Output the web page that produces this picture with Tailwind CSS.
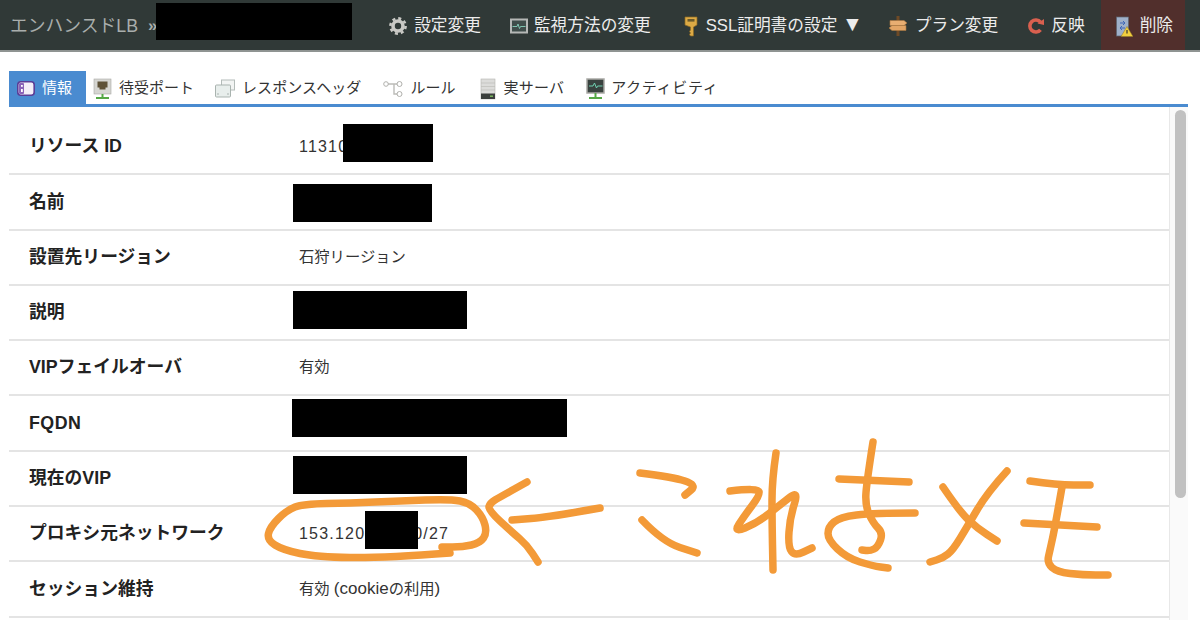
<!DOCTYPE html>
<html lang="ja">
<head>
    <meta charset="utf-8" />
    <title>エンハンスドLB</title>
    <script src="https://cdn.jsdelivr.net/npm/@tailwindcss/browser@4"></script>
</head>
<body class="relative w-[1200px] h-[620px] overflow-hidden bg-white font-['Liberation_Sans','Noto_Sans_CJK_JP',sans-serif]">

    <!-- Top bar -->
    <header class="flex items-center h-[52px] bg-[#303937] border-b-2 border-[#8f9492] text-[16.700px] text-[#ececec]">
        <span class="ml-[10px] mt-[2px] text-[17.800px] text-[#a9aeac]">エンハンスドLB</span>
        <span class="ml-[10px] mt-[2px] text-[#a9aeac] font-bold">»</span>
        <span class="w-[196px] h-[37px] -ml-[1px] -mt-[7px] bg-black"></span>

        <nav class="flex items-stretch h-full ml-auto mr-[15px]">
            <a class="flex items-center gap-[7px] pt-[2px] pr-[29px]">
                <svg class="w-[18px] h-[18px]" viewBox="0 0 18 18"><circle cx="9" cy="9" r="5" fill="none" stroke="#c9c9c5" stroke-width="3.6"/><circle cx="9" cy="9" r="7.6" fill="none" stroke="#c9c9c5" stroke-width="2.6" stroke-dasharray="3 2.97"/></svg>
                <span>設定変更</span>
            </a>
            <a class="flex items-center gap-[6px] pt-[2px] pr-[33px]">
                <svg class="w-[18px] h-[16px]" viewBox="0 0 18 16"><rect x="1" y="1.500" width="16" height="13" fill="#3f4d4a" stroke="#b5b8b6" stroke-width="2"/><path d="M2.500 8.500h4.500l1-2.500 1.500 4.500 1-2h5" fill="none" stroke="#7fc4b0"/></svg>
                <span>監視方法の変更</span>
            </a>
            <a class="flex items-center gap-[8px] pt-[2px] pr-[25px]">
                <svg class="w-[14px] h-[21px]" viewBox="0 0 14 21"><path d="M1 1h12v8l-3.500 2v9H6.500l-1-1.500 1-1.500-1-1.500 1-1.500v-3L1 9z" fill="#dcaa45" stroke="#8e6a22" stroke-width=".7"/><rect x="3.500" y="3" width="7" height="2.600" fill="#6b5a2a"/></svg>
                <span>SSL証明書の設定 <span class="text-[21px] leading-none">▼</span></span>
            </a>
            <a class="flex items-center gap-[7px] pt-[2px] pr-[29px]">
                <svg class="w-[20px] h-[22px]" viewBox="0 0 20 22"><rect x="8.500" y="1" width="3" height="20" fill="#6e4a26"/><path d="M2 5.500h14l3 2.500-3 2.500H2z" fill="#e8ae72" stroke="#a8753f" stroke-width=".6"/><path d="M4 10.500h14v5H4l-3-2.500z" fill="#e2a566" stroke="#a8753f" stroke-width=".6"/></svg>
                <span>プラン変更</span>
            </a>
            <a class="flex items-center gap-[7px] pt-[2px] pr-[16px]">
                <svg class="w-[17px] h-[18px]" viewBox="0 0 17 18"><path d="M13.500 5.200A6 6 0 1 0 13.500 12.800" fill="none" stroke="#d9604f" stroke-width="3.600"/><path d="M10.500 6.500L17 8V2z" fill="#d9604f"/></svg>
                <span>反映</span>
            </a>
            <a class="flex items-center gap-[7px] pt-[2px] pl-[15px] pr-[12px] bg-[#512f2c]">
                <svg class="w-[17px] h-[21px]" viewBox="0 0 17 21"><rect x=".5" y="1" width="12" height="19" fill="#9fb0c9" stroke="#5d6470" stroke-width=".7"/><path d="M4 7h5M7 5l2 2-2 2M9 12H4M6 10l-2 2 2 2" fill="none" stroke="#3e67b8"/><path d="M11 10.500L17 20.500H5z" fill="#f2cf3f" stroke="#8a7424" stroke-width=".5"/><path d="M11 14v3.500" stroke="#333" stroke-width="1.200"/></svg>
                <span>削除</span>
            </a>
        </nav>
    </header>

    <!-- Tabs -->
    <div class="flex items-stretch h-[36px] mt-[19px] mx-[9px] w-[1179px] border-b-[3px] border-[#4a8bd0] text-[15px] text-[#333]">
        <a class="flex items-center gap-[7px] w-[77px] pl-[8px] pt-[2px] bg-[#4a8bd0] text-white">
            <svg class="w-[18px] h-[15px]" viewBox="0 0 18 15"><rect x=".8" y=".8" width="16.400" height="13.400" rx="3" fill="#f4eef8" stroke="#5a3c96" stroke-width="1.600"/><rect x="2" y="2" width="5" height="11" rx="1" fill="#8a63b8"/><rect x="4" y="4" width="1.800" height="1.800" fill="#fff"/><rect x="4" y="8" width="1.800" height="3" fill="#fff"/></svg>
            <span>情報</span>
        </a>
        <a class="flex items-center gap-[7px] ml-[7px] pt-[2px]">
            <svg class="w-[19px] h-[22px]" viewBox="0 0 19 22"><rect x="1" y="1" width="17" height="15" fill="#d6d6d2" stroke="#a9a9a5" stroke-width=".6"/><path d="M4.500 3.500h10v6h-2v2h-6v-2h-2z" fill="#5f5238"/><path d="M9.500 16v3M3 20h13" stroke="#55a845" stroke-width="2"/></svg>
            <span>待受ポート</span>
        </a>
        <a class="flex items-center gap-[7px] ml-[21px] pt-[2px]">
            <svg class="w-[20px] h-[19px]" viewBox="0 0 20 19"><rect x="6.500" y="1" width="13" height="10" fill="#f2f4f3" stroke="#b4bcb9"/><rect x=".5" y="6" width="15" height="12" rx="1" fill="#e8eeec" stroke="#a9b3af"/><path d="M3 16v-2M13 16v-2" stroke="#a9b3af"/></svg>
            <span class="tracking-[0.1px]">レスポンスヘッダ</span>
        </a>
        <a class="flex items-center gap-[7px] ml-[22px] pt-[2px]">
            <svg class="w-[20px] h-[17px]" viewBox="0 0 20 17"><path d="M4 4h12M11 4v10h5" fill="none" stroke="#bcbcb8" stroke-width="1.400"/><circle cx="3" cy="4" r="2.300" fill="#fff" stroke="#b0b0ac"/><circle cx="16.500" cy="4" r="2.500" fill="#fff" stroke="#b0b0ac"/><circle cx="16.500" cy="14" r="2.500" fill="#fff" stroke="#b0b0ac"/></svg>
            <span>ルール</span>
        </a>
        <a class="flex items-center gap-[7px] ml-[25px] pt-[2px]">
            <svg class="w-[16px] h-[22px]" viewBox="0 0 16 22"><rect x="1" y="1" width="14" height="20" fill="#dcdcda" stroke="#b4b4b0" stroke-width=".6"/><path d="M1 5h14M1 8.500h14M1 12h14" stroke="#bdbdb9" stroke-width=".7"/><rect x="1" y="15.500" width="14" height="5.500" fill="#3b3f3d"/><rect x="10" y="17.500" width="3" height="1.400" fill="#7fbf60"/></svg>
            <span class="tracking-[0.2px]">実サーバ</span>
        </a>
        <a class="flex items-center gap-[6px] ml-[22px] pt-[2px]">
            <svg class="w-[19px] h-[22px]" viewBox="0 0 19 22"><rect x="1" y="1" width="17" height="14" fill="#39423f" stroke="#a9a9a5" stroke-width="1.500"/><path d="M3 8h4l1.500-3 2 5 1-2h5" fill="none" stroke="#6fd0b0"/><path d="M9.500 15v4M3 20h13" stroke="#55a845" stroke-width="2"/></svg>
            <span class="tracking-[0.7px]">アクティビティ</span>
        </a>
    </div>

    <!-- Detail table with scrollbar -->
    <div class="flex mx-[9px] w-[1179px] h-[513px]">
        <div class="w-[1160px] pt-[13px] text-[15.300px] text-[#333]">
            <div class="flex items-center h-[55.300px] border-b-2 border-[#e4e4e4]">
                <div class="w-[290px] pl-[20px] text-[17.800px] font-semibold text-[#222]">リソース ID</div>
                <span class="text-[16px] tracking-[1.200px]">11310</span>
                <span class="w-[90px] h-[38px] -ml-[5px] -mt-[8px] bg-black"></span>
            </div>
            <div class="flex items-center h-[55.300px] border-b-2 border-[#e4e4e4]">
                <div class="w-[290px] pl-[20px] text-[17.800px] font-semibold text-[#222]">名前</div>
                <span class="w-[139px] h-[38px] -ml-[6px] mt-[2px] bg-black"></span>
            </div>
            <div class="flex items-center h-[55.300px] border-b-2 border-[#e4e4e4]">
                <div class="w-[290px] pl-[20px] text-[17.800px] font-semibold text-[#222]">設置先リージョン</div>
                <span>石狩リージョン</span>
            </div>
            <div class="flex items-center h-[55.300px] border-b-2 border-[#e4e4e4]">
                <div class="w-[290px] pl-[20px] text-[17.800px] font-semibold text-[#222]">説明</div>
                <span class="w-[174px] h-[38px] -ml-[6px] -mt-[5px] bg-black"></span>
            </div>
            <div class="flex items-center h-[55.300px] border-b-2 border-[#e4e4e4]">
                <div class="w-[290px] pl-[20px] text-[17.800px] font-semibold text-[#222]">VIPフェイルオーバ</div>
                <span>有効</span>
            </div>
            <div class="flex items-center h-[55.300px] border-b-2 border-[#e4e4e4]">
                <div class="w-[290px] pl-[20px] text-[17.800px] font-semibold text-[#222] tracking-[0.5px]">FQDN</div>
                <span class="w-[275px] h-[38px] -ml-[7px] -mt-[11px] bg-black"></span>
            </div>
            <div class="flex items-center h-[55.300px] border-b-2 border-[#e4e4e4]">
                <div class="w-[290px] pl-[20px] text-[17.800px] font-semibold text-[#222]">現在のVIP</div>
                <span class="w-[174px] h-[38px] -ml-[6px] -mt-[6px] bg-black"></span>
            </div>
            <div class="flex items-center h-[55.300px] border-b-2 border-[#e4e4e4]">
                <div class="w-[290px] pl-[20px] text-[17.800px] font-semibold text-[#222]">プロキシ元ネットワーク</div>
                <span class="text-[16px] tracking-[1.200px]">153.120</span>
                <span class="z-10 w-[53px] h-[38px] -mt-[8px] bg-black"></span>
                <span class="-ml-[5px] text-[16px] tracking-[1.200px]">0/27</span>
            </div>
            <div class="flex items-center h-[55.300px] border-b-2 border-[#e4e4e4]">
                <div class="w-[290px] pl-[20px] text-[17.800px] font-semibold text-[#222]">セッション維持</div>
                <span>有効 <span class="text-[17px]">(cookie</span>の利用<span class="text-[17px]">)</span></span>
            </div>
        </div>
        <div class="w-[19px] h-full pt-[3px] pl-[5px] bg-[#fafafa] border-l border-[#e8e8e8]">
            <div class="w-[11px] h-[388px] rounded-full bg-[#c1c1c1]"></div>
        </div>
    </div>

    <!-- Hand-drawn marker note on top of the screenshot -->
    <svg id="note" class="absolute inset-0 w-[1200px] h-[620px] pointer-events-none" viewBox="0 0 1200 620" fill="none" stroke="#f39a38" stroke-width="7.500" stroke-linecap="round" stroke-linejoin="round"></svg>

    <script>
        // marker strokes as point lists, smoothed through the midpoints
        const strokes = [
            [[450,553],[383,558],[317,557],[283,550],[267,540],[270,527],[287,510],[303,504],[350,503],[400,501],[450,499],[470,503],[483,517],[487,533],[480,543],[463,547],[442,547]],
            [[527,482],[500,497],[490,503],[488,510],[513,533],[527,545],[538,562]],
            [[600,508],[550,517],[512,520]],
            [[640,473],[673,477],[697,485],[685,495]],
            [[642,520],[663,542],[697,553]],
            [[776,453],[772,480],[772,520],[773,570]],
            [[730,491],[758,488],[760,495],[745,515],[733,533],[757,523],[780,505],[799,490],[790,517],[788,547],[795,556],[812,548]],
            [[873,442],[867,480],[865,505],[873,523],[883,533],[878,547],[870,551],[862,550]],
            [[839,479],[909,482]],
            [[915,513],[873,513],[840,517],[828,527],[828,540],[847,558],[873,566],[888,568]],
            [[1007,471],[987,493],[967,527],[953,550],[943,558],[930,562]],
            [[943,487],[960,512],[977,528],[997,541]],
            [[1030,481],[1057,485],[1090,485]],
            [[1024,523],[1097,527]],
            [[1062,487],[1055,527],[1050,550],[1047,563],[1057,572],[1083,575],[1108,575]]
        ];
        const note = document.getElementById('note');
        strokes.forEach(pts => {
            let d = 'M' + pts[0].join(' ');
            for (let i = 1; i < pts.length - 1; i++) {
                const mx = (pts[i][0] + pts[i + 1][0]) / 2, my = (pts[i][1] + pts[i + 1][1]) / 2;
                d += ' Q' + pts[i].join(' ') + ' ' + mx + ' ' + my;
            }
            d += ' L' + pts[pts.length - 1].join(' ');
            const p = document.createElementNS('http://www.w3.org/2000/svg', 'path');
            p.setAttribute('d', d);
            note.appendChild(p);
        });
    </script>
</body>
</html>
